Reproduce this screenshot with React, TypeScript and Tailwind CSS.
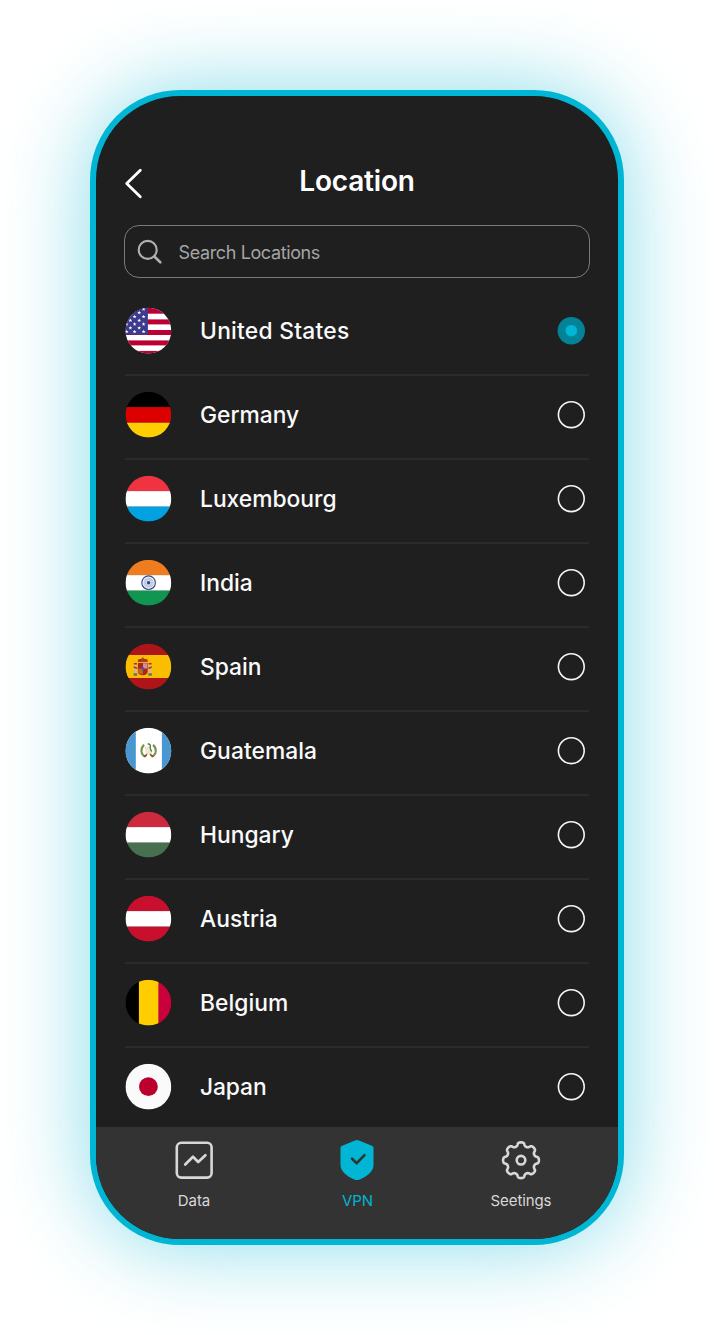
import React from "react";

type Country = { name: string; tracking: string; flag: React.ReactNode };

const H = ({ c, y = [0, 15.4, 31, 46] }: { c: string[]; y?: number[] }) => (
  <>
    {c.map((f, i) => (
      <rect key={i} x="0" y={y[i]} width="46" height={y[i + 1] - y[i]} fill={f} />
    ))}
  </>
);

const star = (cx: number, cy: number, r: number) =>
  Array.from({ length: 10 }, (_, i) => {
    const a = (Math.PI / 5) * i - Math.PI / 2;
    const q = i % 2 ? r * 0.42 : r;
    return `${(cx + q * Math.cos(a)).toFixed(2)},${(cy + q * Math.sin(a)).toFixed(2)}`;
  }).join(" ");

const starCentres: [number, number][] = [
  [18.2, 1.5], [13.8, 5], [18.2, 9], [9.2, 9], [13.8, 12.8], [5, 12.8],
  [18.2, 16.4], [9.2, 16.4], [1.2, 16.4], [13.8, 20.3], [5, 20.3],
  [18.2, 24], [9.2, 24], [1.2, 24],
];

const UsFlag = () => (
  <>
    <rect width="46" height="46" fill="#fff" />
    {[0, 11.7, 22.3, 32.7, 43.2].map((y, i) => (
      <rect key={y} y={y} width="46" height={[6, 5, 5, 5, 3][i]} fill="#bd0034" />
    ))}
    <rect width="22.5" height="27" fill="#3c3b8e" />
    {starCentres.map(([x, y]) => (
      <polygon key={`${x}-${y}`} points={star(x, y, 2)} fill="#fff" />
    ))}
  </>
);

const IndiaFlag = () => (
  <>
    <H c={["#f07c20", "#fff", "#109650"]} />
    <circle cx="23.2" cy="23" r="6.8" fill="#f2f3f8" stroke="#2b4790" strokeWidth="1.1" />
    <circle cx="23.2" cy="23" r="3.6" fill="none" stroke="#a3aed0" strokeWidth="3" strokeDasharray="0.55 0.4" />
    <circle cx="23.2" cy="23" r="1.7" fill="#2b4790" />
  </>
);

const SpainFlag = () => (
  <>
    <H c={["#ad1519", "#fabd00", "#ad1519"]} y={[0, 11.3, 34.3, 46]} />
    <path d="M9 20.5h2.2v9H9zM23.5 20.5h2.2v9h-2.2z" fill="#c9b6ae" />
    <path d="M8.4 22.5l3.3 1.2v1.5l-3.3-1zM26.3 22.5L23 23.7v1.5l3.3-1zM8.5 19.2h3v1.5h-3zM23.2 19.2h3v1.5h-3z" fill="#b52a20" />
    <path d="M8.2 29.5h3.6V32H8.2zM22.9 29.5h3.6V32h-3.6z" fill="#657174" />
    <path d="M12.5 19.2h9.8v8.3c0 2.8-2.1 4.1-4.9 4.1s-4.9-1.3-4.9-4.1z" fill="#ae2420" />
    <path d="M17.6 19.5h4.2v5.3h-4.2z" fill="#ce91a6" />
    <path d="M12.8 25h4.6v5.6c-2.8 0-4.6-1.1-4.6-3z" fill="#bb6b22" />
    <circle cx="17.4" cy="24.8" r="1.5" fill="#475ba0" />
    <path d="M12.7 18.2c-1-2 .6-3.5 2.8-2.8 1.2-1.2 2.7-1.2 3.8 0 2.2-.7 3.8.8 2.8 2.8z" fill="#b22c20" />
    <path d="M13.3 18h8M17.4 13.6v3.2M16.3 14.7h2.2" stroke="#9e5b18" strokeWidth="1" />
  </>
);

const GuatemalaFlag = () => (
  <>
    <rect width="46" height="46" fill="#fff" />
    <rect width="10.4" height="46" fill="#4997d0" />
    <rect x="36.5" width="10" height="46" fill="#4997d0" />
    <path d="M18.8 17.2c-4.2 3.4-3.6 10 1.4 12M27.6 17.2c4.2 3.4 3.6 10-1.4 12" fill="none" stroke="#76934b" strokeWidth="2" />
    <path d="M18.5 29l4.7-4 4.7 4" fill="none" stroke="#a98350" strokeWidth="1.3" />
    <path d="M19.8 20l5.2-1.5 1.2 7-4.6 1.4z" fill="#f1ead0" stroke="#d8cc9c" strokeWidth=".5" />
    <path d="M22.2 16.4c2.5-.5 3.4 1.3 2.6 3.2-.3 1.3.8 2.7 1.5 4.3" fill="none" stroke="#4b7d3c" strokeWidth="1.3" />
    <path d="M18.4 28.6l3-1M28 28.6l-3-1" stroke="#8c4a2a" strokeWidth="1.7" />
  </>
);

const countries: Country[] = [
  { name: "United States", tracking: "tracking-[0.25px]", flag: <UsFlag /> },
  { name: "Germany", tracking: "tracking-[-0.02px]", flag: <H c={["#000", "#dd0000", "#ffce00"]} /> },
  { name: "Luxembourg", tracking: "tracking-[0px]", flag: <H c={["#f03340", "#fff", "#00a2e1"]} /> },
  { name: "India", tracking: "tracking-[0px]", flag: <IndiaFlag /> },
  { name: "Spain", tracking: "tracking-[0px]", flag: <SpainFlag /> },
  { name: "Guatemala", tracking: "tracking-[0.06px]", flag: <GuatemalaFlag /> },
  { name: "Hungary", tracking: "tracking-[0px]", flag: <H c={["#cd2a3e", "#fff", "#486f4f"]} /> },
  { name: "Austria", tracking: "tracking-[0px]", flag: <H c={["#c8102e", "#fff", "#c8102e"]} /> },
  {
    name: "Belgium",
    tracking: "tracking-[0.06px]",
    flag: (
      <>
        <rect width="14" height="46" fill="#000" />
        <rect x="13.5" width="20" height="46" fill="#ffcd00" />
        <rect x="33" width="13" height="46" fill="#c8003c" />
      </>
    ),
  },
  {
    name: "Japan",
    tracking: "tracking-[-0.1px]",
    flag: (
      <>
        <rect width="46" height="46" fill="#fafafa" />
        <circle cx="23" cy="23" r="9.4" fill="#bc002d" />
      </>
    ),
  },
];

function Row({ country, selected, last }: { country: Country; selected: boolean; last: boolean }) {
  return (
    <li className="flex h-[84px] flex-col">
      <div className="flex h-[82px] shrink-0 items-center pr-[4px] pb-[4px]">
        <svg viewBox="-0.4 -0.7 47 48" className="h-[48px] w-[47px] shrink-0">
          <defs>
            <clipPath id="flag-disc">
              <circle cx="23" cy="23" r="22.9" />
            </clipPath>
          </defs>
          <g clipPath="url(#flag-disc)">{country.flag}</g>
        </svg>
        <span className={`ml-[28px] flex-1 text-[22.8px] leading-[30px] font-medium text-[#fafafa] ${country.tracking}`}>
          {country.name}
        </span>
        <svg viewBox="-0.3 0.3 28 28" className="h-[28px] w-[28px]">
          {selected ? (
            <>
              <circle cx="14" cy="14" r="13.7" fill="#038397" />
              <circle cx="14" cy="14" r="5.8" fill="#00b6d4" />
            </>
          ) : (
            <circle cx="14" cy="14" r="12.9" fill="none" stroke="#f5f5f5" strokeWidth="1.6" />
          )}
        </svg>
      </div>
      {!last && <div className="h-[2px] bg-[#2b2b2b]" />}
    </li>
  );
}

const gear = (() => {
  const pts: string[] = [];
  for (let i = 0; i <= 240; i++) {
    const t = (i / 240) * Math.PI * 2;
    const r = 16.2 + 1.8 * Math.cos(8 * t) - 0.1 * Math.cos(16 * t);
    const b = 0.01 * Math.sin(8 * t) + 0.035 * Math.sin(16 * t);
    pts.push(`${(20 + r * Math.sin(t + b)).toFixed(2)} ${(20.2 - r * Math.cos(t + b)).toFixed(2)}`);
  }
  return `M${pts.join("L")}Z`;
})();

export default function App() {
  return (
    <main className="h-[1335px] w-[714px] overflow-hidden bg-white p-[90px] font-['Inter',sans-serif]">
      <div className="flex h-[1155px] w-[534px] flex-col overflow-hidden rounded-[90px] border-[6px] border-[#00b6d4] bg-[#1f1f1f] shadow-[0_0_86px_rgba(0,182,212,0.48)]">
        <header className="mt-[62px] grid h-[46px] grid-cols-[60px_1fr_60px] items-center">
          <svg viewBox="0 0 20 32" className="mt-[4px] ml-[28px] h-[32px] w-[20px]" fill="none">
            <path d="M16.3 3.2L2.7 16.5 16.3 29.8" stroke="#fff" strokeWidth="2.8" strokeLinecap="round" strokeLinejoin="round" />
          </svg>
          <h1 className="text-center text-[28px] leading-[34px] font-semibold tracking-[-0.2px] text-white">Location</h1>
        </header>
        <div className="mt-[21px] ml-[28px] flex h-[53px] w-[466px] shrink-0 items-center rounded-[15px] border border-[#7b7b7b] pt-[1px] pl-[12px]">
          <svg viewBox="0 0 28 28" className="h-[28px] w-[28px]" fill="none" stroke="#b0b0b0" strokeLinecap="round">
            <circle cx="10.7" cy="11.9" r="9" strokeWidth="2.1" />
            <path d="M17.3 18.5L23.3 24.3" strokeWidth="2.6" />
          </svg>
          <span className="mt-[1px] ml-[13.5px] text-[18px] leading-[24px] tracking-[-0.38px] text-[#a5a5a5]">Search Locations</span>
        </div>
        <ul className="mt-[14px] ml-[29px] h-[835px] w-[464px] shrink-0">
          {countries.map((c, i) => (
            <Row key={c.name} country={c} selected={i === 0} last={i === countries.length - 1} />
          ))}
        </ul>
        <nav className="flex h-[112px] shrink-0 bg-[#333] pl-[16px] text-[15px] leading-[20px] tracking-[-0.1px] text-[#d8d8d8]">
          <div className="flex w-[163px] flex-col items-center pt-[13px]">
            <svg viewBox="0 0 40 40" className="h-10 w-10" fill="none" stroke="#d8d8d8" strokeLinecap="round" strokeLinejoin="round">
              <rect x="2.8" y="2.8" width="34.8" height="34.8" rx="4.5" strokeWidth="2.6" />
              <path d="M11.2 24.5l7.8-7.7 5.2 5.2 7.2-6.8" strokeWidth="2.7" />
            </svg>
            <span className="mt-[11px] ml-[1px]">Data</span>
          </div>
          <div className="flex w-[164px] flex-col items-center pt-[13px] text-[#00b6d4]">
            <svg viewBox="0 0 40 40" className="h-10 w-10" fill="none">
              <path d="M20 0q-1 0-2 .4L4.6 5.9Q3.5 6.4 3.5 7.8v17.2c0 7.7 9 12.7 15 15q1.5.5 3 0c6-2.3 15-7.3 15-15V7.8q0-1.4-1.1-1.9L22 .4Q21 0 20 0z" fill="#00b6d4" />
              <path d="M15 18.7l4.7 4.4 7.8-8" stroke="#333" strokeWidth="2.6" strokeLinecap="round" />
            </svg>
            <span className="mt-[11px] ml-[1px]">VPN</span>
          </div>
          <div className="flex w-[163px] flex-col items-center pt-[13px]">
            <svg viewBox="0 0 40 40" className="h-10 w-10" fill="none" stroke="#d8d8d8" strokeWidth="2.6">
              <path d={gear} strokeLinejoin="round" />
              <circle cx="20" cy="20.2" r="4.3" />
            </svg>
            <span className="mt-[11px] ml-[1px]">Seetings</span>
          </div>
        </nav>
      </div>
    </main>
  );
}
